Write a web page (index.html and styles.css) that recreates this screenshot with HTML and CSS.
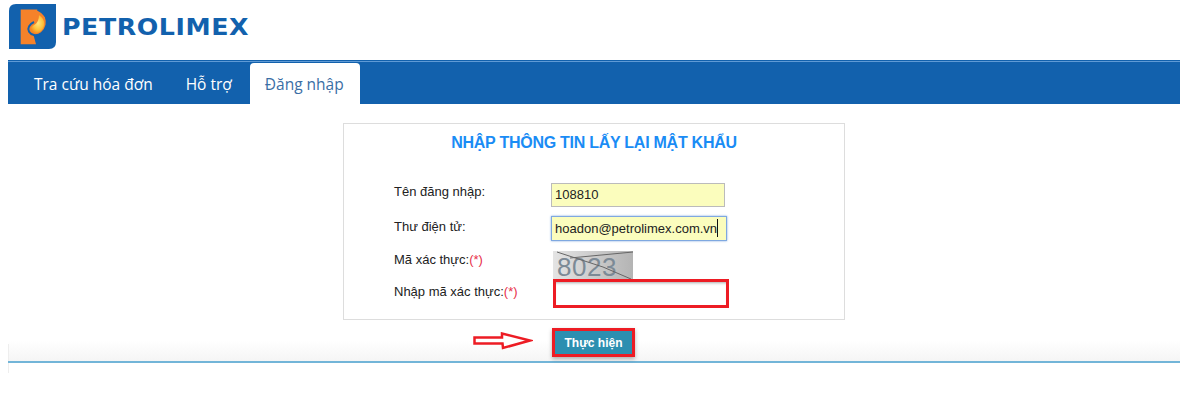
FILE: index.html
```html
<!DOCTYPE html>
<html lang="vi">
<head>
    <meta charset="UTF-8">
    <title>Petrolimex - Lấy lại mật khẩu</title>
    <link rel="stylesheet" href="styles.css">
</head>
<body>

<div class="header">
    <svg class="logo-mark" width="47" height="45" viewBox="0 0 47 45">
        <defs>
            <radialGradient id="flame" cx="0.55" cy="0.45" r="0.6">
                <stop offset="0" stop-color="#ffe680"/>
                <stop offset="0.6" stop-color="#fdc13a"/>
                <stop offset="1" stop-color="#f58a1f"/>
            </radialGradient>
        </defs>
        <path d="M7 0H47V38Q47 45 40 45H0V7Q0 0 7 0Z" fill="#1261ad"/>
        <path d="M11.700 5.500H28C34 8 38 14 37 21C36 27 31 31 24.500 31L27 40.300H11.700Z" fill="#f5822a"/>
        <path d="M28.500 5.500C36 9 39 15 37.500 21C36 28 30 32 25 31C20.500 30 18 26 20 22.500C21 20.500 23 19 25 18" fill="none" stroke="#1261ad" stroke-width="2"/>
        <path d="M30 11C34.500 14 36 18 35 22C34 27 29 29.800 25 29C21.500 28 20.500 25 22.500 23C25 20.500 30 20 30 11Z" fill="url(#flame)"/>
    </svg>
    <span class="logo-text">PETROLIMEX</span>
</div>

<div class="nav">
    <a class="nav-item" href="#">Tra cứu hóa đơn</a>
    <a class="nav-item" href="#">Hỗ trợ</a>
    <a class="nav-item active" href="#">Đăng nhập</a>
</div>

<div class="card">
    <h3>NHẬP THÔNG TIN LẤY LẠI MẬT KHẨU</h3>
    <div class="form-grid">
        <label class="label-user">Tên đăng nhập:</label>
        <input class="field" type="text" value="108810">

        <label class="label-mail">Thư điện tử:</label>
        <div class="field focused">hoadon@petrolimex.com.vn<span class="caret"></span></div>

        <label class="label-code">Mã xác thực:<span class="req">(*)</span></label>
        <div class="captcha">
            <span>8023</span>
            <svg class="captcha-lines" width="80" height="28" viewBox="0 0 80 28">
                <path d="M4 1L50 16M17 7L80 1M50 16L78 28" fill="none" stroke="#666" stroke-width="1"/>
            </svg>
        </div>

        <label class="label-enter">Nhập mã xác thực:<span class="req">(*)</span></label>
        <input class="field-marked" type="text">
    </div>
</div>

<div class="actions">
    <div class="submit-wrap">
        <svg class="arrow" width="60" height="18" viewBox="0 0 60 18">
            <path d="M1.500 5.500H29L29 1.500L57 8.500L30 16L29.500 11.500H1.500Z" fill="#fff" stroke="#ed1c24" stroke-width="2.500"/>
        </svg>
        <button class="btn">Thực hiện</button>
    </div>
</div>
<div class="foot"></div>

</body>
</html>
```

FILE: styles.css
```css
body {
    font-family: "Liberation Sans", Arial, sans-serif;
    margin: 0;
    padding: 0 12px 0 8px;
    background-color: #fff;
    color: #222;
}
.header {
    display: flex;
    align-items: center;
    gap: 6px;
    height: 60px;
    padding: 4px 0 11px 1px;
    box-sizing: border-box;
}
.logo-mark {
    display: block;
}
.logo-text {
    font-family: "DejaVu Sans", sans-serif;
    font-weight: bold;
    font-size: 23px;
    letter-spacing: 0.5px;
    color: #1261ad;
    transform: scaleX(1.1);
    transform-origin: left center;
}
.nav {
    display: flex;
    height: 44px;
    box-sizing: border-box;
    padding: 2px 0 0 11px;
    background-color: #1261ad;
    border-top: 1px solid #1261ad;
    box-shadow: inset 0 1px 0 #5f9ad5;
}
.nav-item {
    font-family: "Open Sans", sans-serif;
    font-size: 15.500px;
    line-height: 42px;
    padding: 0 15px;
    margin-right: 3px;
    color: #fff;
    text-decoration: none;
}
.nav-item.active {
    padding-right: 16px;
    background-color: #fff;
    color: #3a6ea5;
    border-radius: 4px 4px 0 0;
    margin: 0;
}
.card {
    width: 502px;
    height: 197px;
    box-sizing: border-box;
    margin: 19px 0 0 335px;
    padding: 9px 0 0 50px;
    border: 1px solid #ddd;
}
.card h3 {
    margin: 0 0 0 -50px;
    text-align: center;
    font-size: 16px;
    line-height: 19px;
    letter-spacing: -0.26px;
    color: #1a8cf5;
}
.form-grid {
    display: grid;
    grid-template-columns: 157px 180px;
    grid-template-rows: 33px 35px 28px 29px;
    margin-top: 31px;
    font-size: 13px;
}
.form-grid label {
    line-height: 16px;
}
.label-user {
    padding-top: 1px;
}
.label-mail {
    padding-top: 3px;
}
.label-code {
    padding-top: 1px;
}
.label-enter {
    padding-top: 5px;
}
.req {
    color: #e8304a;
}
.field {
    width: 174px;
    height: 24px;
    box-sizing: border-box;
    margin: 0;
    padding: 0 3px 1px;
    border: 1px solid #bbb;
    background-color: #fbfdbd;
    font: 13px "Liberation Sans", Arial, sans-serif;
    color: #222;
}
.field.focused {
    width: 176px;
    height: 25px;
    line-height: 23px;
    padding-bottom: 0;
    border: 1px solid #7fa8e0;
    box-shadow: 0 0 2px #7fa8e0;
    white-space: nowrap;
}
.caret {
    display: inline-block;
    width: 1px;
    height: 18px;
    vertical-align: -4px;
    background-color: #111;
}
.captcha {
    position: relative;
    width: 80px;
    height: 28px;
    margin-left: 2px;
    background: linear-gradient(90deg, #e4e4e4, #b4b4b4);
}
.captcha span {
    display: block;
    padding: 4px 0 0 4px;
    font-size: 26px;
    line-height: 24px;
    letter-spacing: 0.5px;
    color: #7c8a96;
}
.captcha-lines {
    position: absolute;
    left: 0;
    top: 0;
}
.field-marked {
    width: 176px;
    height: 29px;
    box-sizing: border-box;
    margin: 0 0 0 2px;
    padding: 0 3px;
    border: 3px solid #ed1c24;
    background-color: #fff;
    box-shadow: inset 0 3px 3px -2px #aaa;
    outline: none;
}
.actions {
    height: 41px;
    border-bottom: 2px solid #72b5d8;
    background:
        linear-gradient(#eee, #eee) left 24px / 1px 100% no-repeat,
        linear-gradient(#fff 50%, #f5f5f5);
}
.submit-wrap {
    position: relative;
    width: 83px;
    margin-left: 544px;
    padding-top: 8px;
}
.arrow {
    position: absolute;
    left: -79px;
    top: 12px;
}
.btn {
    display: block;
    width: 83px;
    height: 29px;
    box-sizing: border-box;
    padding: 0;
    border: 3px solid #ed1c24;
    background-color: #2c8fb0;
    color: #fff;
    font: bold 12px "Liberation Sans", Arial, sans-serif;
    box-shadow: 0 2px 4px rgba(0, 0, 0, 0.3);
}
.foot {
    height: 10px;
    border-left: 1px solid #eee;
}
```
